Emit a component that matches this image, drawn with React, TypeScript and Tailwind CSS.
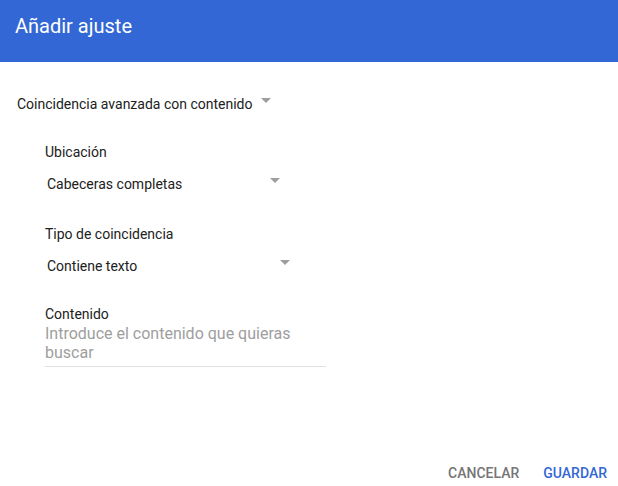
import React from 'react';

function Caret({ className = '' }: { className?: string }) {
  return (
    <svg width="12" height="6" viewBox="0 0 12 6" className={className}>
      <path d="M1 0h10L6 5z" fill="#9e9e9e" />
    </svg>
  );
}

function Select({ value, width }: { value: string; width: string }) {
  return (
    <div className={`flex items-center justify-between pl-[2px] h-[20px] ${width}`}>
      <span className="text-[14px] leading-[20px] text-[#212121]">{value}</span>
      <Caret className="-mt-[6px]" />
    </div>
  );
}

export default function App() {
  return (
    <div className="w-[618px] h-[486px] bg-white flex flex-col" style={{ fontFamily: 'Roboto, "Liberation Sans", sans-serif' }}>
      <header className="h-[62px] bg-[#3367d6] px-[15px] pt-[14px] shrink-0">
        <h1 className="text-[20px] leading-[24px] text-white">Añadir ajuste</h1>
      </header>

      <main className="flex-1 pl-[17px] pt-[32px]">
        <div className="flex items-center gap-[7px] h-[20px]">
          <span className="text-[14px] leading-[20px] text-[#212121]">Coincidencia avanzada con contenido</span>
          <Caret className="-mt-[6px]" />
        </div>

        <div className="pl-[28px] pt-[28px] flex flex-col">
          <label className="text-[14px] leading-[20px] text-[#212121]">Ubicación</label>
          <div className="mt-[12px]">
            <Select value="Cabeceras completas" width="w-[236px]" />
          </div>

          <label className="mt-[30px] text-[14px] leading-[20px] text-[#212121]">Tipo de coincidencia</label>
          <div className="mt-[12px]">
            <Select value="Contiene texto" width="w-[246px]" />
          </div>

          <label className="mt-[28px] text-[14px] leading-[20px] text-[#212121]">Contenido</label>
          <div className="w-[281px] border-b border-[#e0e0e0] pb-[4px]">
            <p className="text-[16px] leading-[19px] text-[#9e9e9e]">Introduce el contenido que quieras buscar</p>
          </div>
        </div>
      </main>

      <footer className="h-[56px] flex items-start justify-end pr-[11px] pt-[33px] gap-[24px] shrink-0">
        <button className="text-[14px] leading-[20px] font-medium text-[#757575] uppercase">Cancelar</button>
        <button className="text-[14px] leading-[20px] font-medium text-[#3367d6] uppercase">Guardar</button>
      </footer>
    </div>
  );
}
